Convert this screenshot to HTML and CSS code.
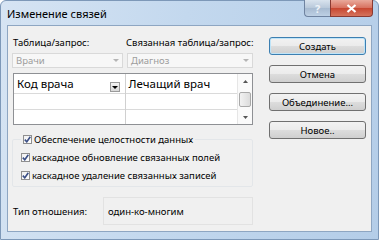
FILE: index.html
```html
<!DOCTYPE html>
<html lang="ru">
<head>
  <meta charset="UTF-8" />
  <meta name="viewport" content="width=device-width, initial-scale=1.0" />
  <title>Изменение связей</title>
  <link rel="stylesheet" href="styles.css">
</head>
<body>
  <div class="window">
    <div class="titlebar">
      <span class="title">Изменение связей</span>
      <div class="caption">
        <span class="cap-btn help">?</span>
        <span class="cap-btn close">
          <svg width="11" height="9" viewBox="0 0 11 9"><path d="M1.5 1 L9.5 8 M9.5 1 L1.5 8" stroke="#fff" stroke-width="2.2" fill="none"/></svg>
        </span>
      </div>
    </div>

    <div class="client">
      <div class="left">
        <div class="labels">
          <span class="lbl-a">Таблица/запрос:</span>
          <span class="lbl-b">Связанная таблица/запрос:</span>
        </div>
        <div class="combos">
          <div class="combo c1">Врачи<svg width="6" height="3" viewBox="0 0 6 3"><path d="M0 0 H6 L3 3 Z" fill="#b5b5b5"/></svg></div>
          <div class="combo c2">Диагноз<svg width="6" height="3" viewBox="0 0 6 3"><path d="M0 0 H6 L3 3 Z" fill="#b5b5b5"/></svg></div>
        </div>

        <div class="grid">
          <div class="col col-a">
            <div class="cell r1">Код врача
              <span class="dd"><svg width="6" height="3" viewBox="0 0 6 3"><path d="M0 0 H6 L3 3 Z" fill="#000"/></svg></span>
            </div>
            <div class="cell r2"></div>
            <div class="cell r3"></div>
          </div>
          <div class="col col-b">
            <div class="cell r1">Лечащий врач</div>
            <div class="cell r2"></div>
            <div class="cell r3"></div>
          </div>
          <div class="scroll">
            <span class="arrow"><svg width="5" height="3" viewBox="0 0 5 3"><path d="M0 3 H5 L2.5 0 Z" fill="#555"/></svg></span>
            <span class="track"><span class="thumb"></span></span>
            <span class="arrow"><svg width="5" height="3" viewBox="0 0 5 3"><path d="M0 0 H5 L2.5 3 Z" fill="#555"/></svg></span>
          </div>
        </div>

        <fieldset class="integrity">
          <legend>
            <label class="check"><span class="box"><svg width="7" height="7" viewBox="0 0 7 7"><path d="M0.8 3.6 L2.8 5.8 L6.3 0.8" stroke="#3b4f86" stroke-width="1.6" fill="none"/></svg></span>Обеспечение целостности данных</label>
          </legend>
          <label class="check"><span class="box"><svg width="7" height="7" viewBox="0 0 7 7"><path d="M0.8 3.6 L2.8 5.8 L6.3 0.8" stroke="#3b4f86" stroke-width="1.6" fill="none"/></svg></span>каскадное обновление связанных полей</label>
          <label class="check"><span class="box"><svg width="7" height="7" viewBox="0 0 7 7"><path d="M0.8 3.6 L2.8 5.8 L6.3 0.8" stroke="#3b4f86" stroke-width="1.6" fill="none"/></svg></span>каскадное удаление связанных записей</label>
        </fieldset>

        <div class="reltype">
          <span class="rel-label">Тип отношения:</span>
          <div class="rel-box">один-ко-многим</div>
        </div>
      </div>

      <div class="btns">
        <button class="btn default">Создать</button>
        <button class="btn">Отмена</button>
        <button class="btn">Объединение...</button>
        <button class="btn">Новое..</button>
      </div>
    </div>
  </div>
</body>
</html>
```

FILE: styles.css
```css
body {
  margin: 0;
  font-family: "Noto Sans", "DejaVu Sans", sans-serif;
  font-size: 9.5px;
  color: #000;
  background: #fff;
}
.window {
  width: 379px;
  height: 240px;
  box-sizing: border-box;
  display: flex;
  flex-direction: column;
  padding: 0 6px 7px 6px;
  background: linear-gradient(100deg, #d6e4f3 0%, #c3d8ee 45%, #b4cde8 100%);
  border: 1px solid #7d98b8;
  border-radius: 6px 6px 0 0;
}
.titlebar {
  height: 24px;
  display: flex;
  align-items: flex-start;
}
.title {
  font-size: 11px;
  line-height: 14px;
  margin-top: 6px;
}
.caption {
  margin-left: auto;
  margin-top: -1px;
  margin-right: -1px;
  display: flex;
}
.cap-btn {
  height: 17px;
  box-sizing: border-box;
  display: flex;
  align-items: center;
  justify-content: center;
  border: 1px solid #6f83a0;
  border-top: 0;
}
.help {
  width: 26px;
  border-radius: 0 0 0 4px;
  border-right: 0;
  background: linear-gradient(#d9e3ee, #b8c8da 50%, #a7bad0 50%, #bdd0e4);
  color: #eef3f8;
  font-weight: bold;
  font-size: 11px;
}
.close {
  width: 43px;
  border-radius: 0 0 4px 0;
  border-color: #8a3a32;
  background: linear-gradient(#e9a99b, #d7705e 50%, #c7452f 50%, #d5735c);
}
.client {
  flex: 1;
  display: flex;
  gap: 16px;
  padding: 11px 5px 0 4px;
  background: #f0f0f0;
  border: 1px solid #8ea6c2;
}
.left {
  width: 241px;
}
.labels {
  display: flex;
  height: 12px;
  line-height: 12px;
  padding-left: 1px;
  white-space: nowrap;
}
.lbl-a {
  width: 113px;
  flex-shrink: 0;
}
.combos {
  display: flex;
  gap: 4px;
  margin-top: 4px;
}
.combo {
  height: 15px;
  box-sizing: border-box;
  display: flex;
  align-items: center;
  padding-left: 3px;
  border: 1px solid #d9d9d9;
  background: #f7f7f7;
  color: #9d9d9d;
}
.c1 {
  width: 111px;
}
.c2 {
  width: 126px;
}
.combo svg {
  margin-left: auto;
  margin-right: 3px;
}
.grid {
  display: flex;
  height: 52px;
  box-sizing: border-box;
  margin: 5px 0 0 1px;
  border: 1px solid #8e9094;
  background: #fff;
}
.col-a {
  width: 111px;
  border-right: 1px solid #d0d0d0;
}
.col-b {
  width: 112px;
}
.cell {
  display: flex;
  align-items: center;
  padding-left: 3px;
  font-size: 11.5px;
  border-bottom: 1px solid #dadada;
}
.r1 {
  height: 19px;
}
.r2 {
  height: 15px;
}
.r3 {
  height: 14px;
  border-bottom: 0;
}
.dd {
  margin-left: auto;
  margin-right: 5px;
  align-self: flex-end;
  margin-bottom: 1px;
  width: 10px;
  height: 10px;
  box-sizing: border-box;
  display: flex;
  align-items: center;
  justify-content: center;
  border: 1px solid #9a9a9a;
  background: linear-gradient(#f4f4f4, #d8d8d8);
}
.scroll {
  width: 14px;
  display: flex;
  flex-direction: column;
  background: #fafafa;
  border-left: 1px solid #e6e6e6;
}
.arrow {
  height: 14px;
  display: flex;
  align-items: center;
  justify-content: center;
}
.track {
  flex: 1;
  display: flex;
  flex-direction: column;
  justify-content: center;
  padding: 0 1px;
}
.thumb {
  height: 13px;
  border: 1px solid #a9a9a9;
  border-radius: 2px;
  background: linear-gradient(90deg, #f2f2f2, #dcdcdc);
}
.integrity {
  margin: 5px 0 0 0;
  padding: 0 0 2px 8px;
  border: 1px solid #e3e6e9;
  border-radius: 2px;
}
.integrity legend {
  padding: 0 2px;
}
.check {
  display: flex;
  align-items: center;
  gap: 2px;
  height: 18px;
  white-space: nowrap;
}
.box {
  width: 9px;
  height: 9px;
  box-sizing: border-box;
  display: flex;
  align-items: center;
  justify-content: center;
  border: 1px solid #8f8f8f;
  background: linear-gradient(135deg, #f0f0f0, #ffffff);
}
.reltype {
  display: flex;
  align-items: center;
  margin-top: 10px;
}
.rel-label {
  width: 90px;
  padding-left: 1px;
}
.rel-box {
  width: 150px;
  height: 28px;
  box-sizing: border-box;
  display: flex;
  align-items: center;
  padding-left: 4px;
  border: 1px solid #e2e2e2;
}
.btns {
  width: 97px;
  display: flex;
  flex-direction: column;
  gap: 10px;
}
.btn {
  height: 18px;
  padding: 0;
  font: inherit;
  color: #000;
  border: 1px solid #707070;
  border-radius: 3px;
  background: linear-gradient(#f2f2f2, #ebebeb 50%, #dddddd 50%, #cfcfcf);
}
.btn.default {
  border-color: #3c7fb1;
  box-shadow: inset 0 0 0 1px #bfe4f8;
}
```
